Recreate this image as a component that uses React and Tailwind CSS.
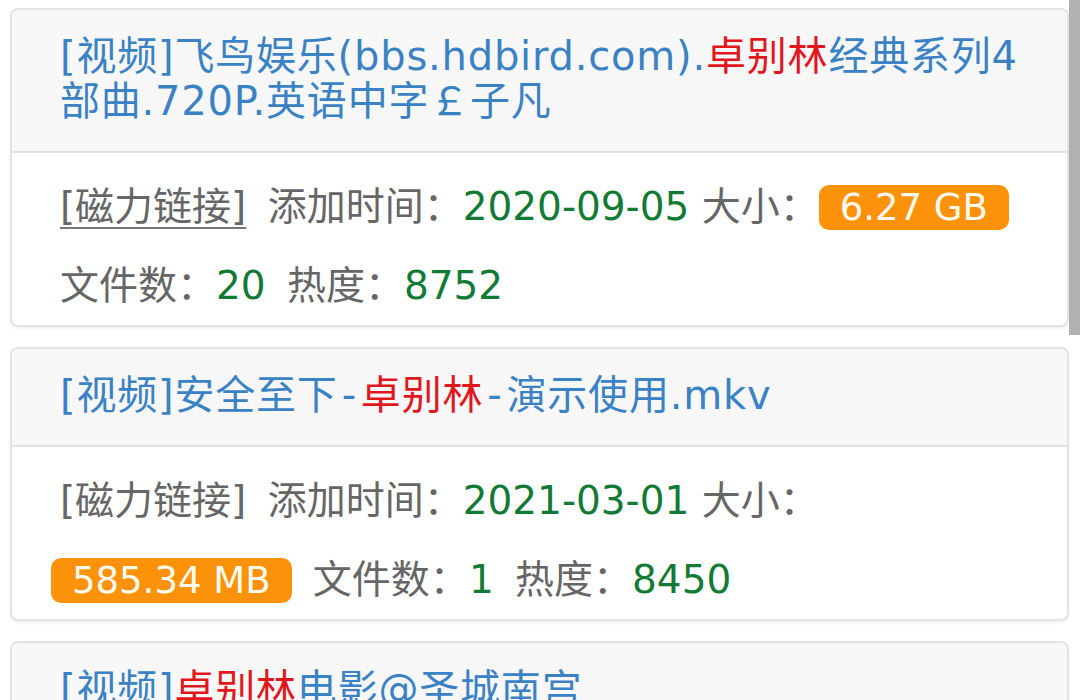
import React from "react";

const FONT = "font-['DejaVu_Sans','Noto_Sans_CJK_SC',sans-serif]";

function Red({ children }) {
  return <span className="text-[#e0171d]">{children}</span>;
}

function Green({ children }) {
  return <span className="text-[#137a35]">{children}</span>;
}

function Dash() {
  return <span className="mx-[4px]">-</span>;
}

function Badge({ children }) {
  return (
    <span className="inline-block rounded-[10px] bg-[#fb9209] px-[21px] text-[37px] leading-[45px] text-[#fffaf0] align-baseline">
      {children}
    </span>
  );
}

function Pad() {
  return <span className="text-[28px] leading-none">{"\u00a0"}</span>;
}

function Card({ title, meta }) {
  return (
    <div className="overflow-hidden rounded-[8px] border-2 border-[#e3e3e3] bg-white shadow-[0_2px_3px_rgba(0,0,0,0.06)]">
      <div className="border-b-2 border-[#e3e3e3] bg-[#f7f7f7] pl-[48px] pr-[48px] pt-[24px] pb-[27px] text-[40px] leading-[45px] tracking-[0.8px] text-[#3b82c4]">
        {title}
      </div>
      {meta && (
        <div className="pl-[39px] pr-[39px] pt-[14px] text-[39px] leading-[79px] text-[#666666]">
          {meta}
        </div>
      )}
    </div>
  );
}

export default function App() {
  return (
    <div className={`relative h-[700px] overflow-hidden bg-white ${FONT}`}>
      <div className="flex flex-col gap-[20px] pl-[10px] pr-[11px] pt-[8px]">
        <Card
          title={
            <>
              [视频]飞鸟娱乐(bbs.hdbird.com).<Red>卓别林</Red>经典系列4部曲.720P.英语中字￡子凡
            </>
          }
          meta={
            <>
              <Pad />
              <a className="underline decoration-[#777777] decoration-2 underline-offset-[7px]">[磁力链接]</a>
              <Pad /> 添加时间：<Green>2020-09-05</Green> 大小：<Badge>6.27 GB</Badge>{" "}
              <Pad />
              文件数：<Green>20</Green> <Pad />
              热度：<Green>8752</Green>
            </>
          }
        />
        <Card
          title={
            <>
              [视频]安全至下<Dash />
              <Red>卓别林</Red>
              <Dash />
              演示使用.mkv
            </>
          }
          meta={
            <>
              <Pad />
              <a>[磁力链接]</a>
              <Pad /> 添加时间：<Green>2021-03-01</Green> 大小：<Badge>585.34 MB</Badge>{" "}
              <Pad />
              文件数：<Green>1</Green> <Pad />
              热度：<Green>8450</Green>
            </>
          }
        />
        <Card
          title={
            <>
              [视频]<Red>卓别林</Red>电影@圣城南宫
            </>
          }
        />
      </div>
      <div className="absolute right-0 top-0 h-[335px] w-[11px] bg-[#b1b1b1]" />
    </div>
  );
}
